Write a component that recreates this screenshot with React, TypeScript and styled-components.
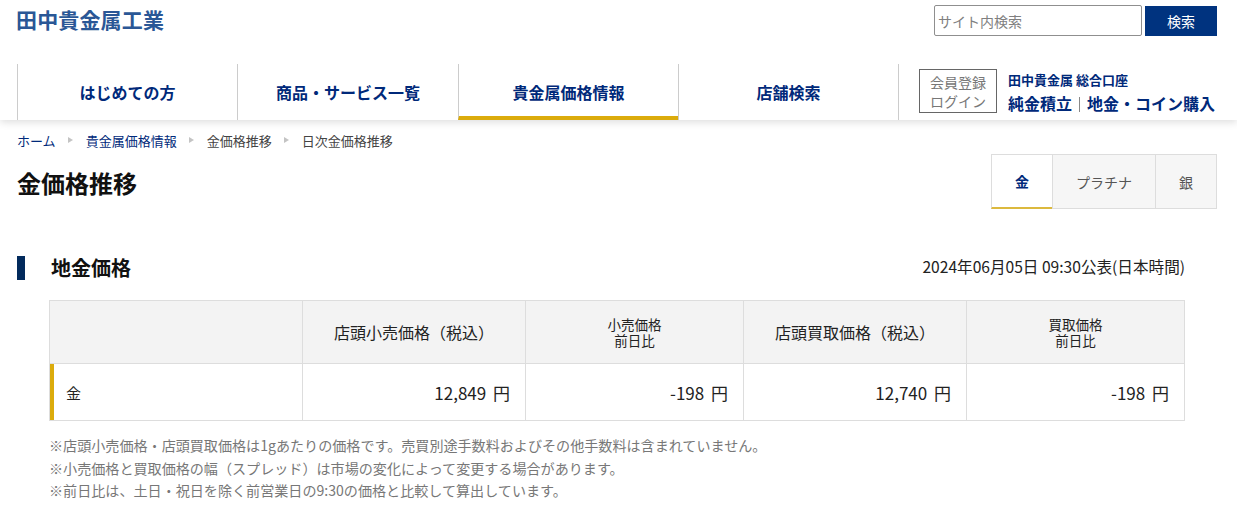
import { Fragment } from "react";
import styled, { createGlobalStyle } from "styled-components";

const GlobalStyle = createGlobalStyle`
  html, body {
    margin: 0;
    padding: 0;
    background: #fff;
    color: #222;
    font-family: "Noto Sans CJK JP", "Noto Sans", sans-serif;
  }
  * { box-sizing: border-box; }
`;

const Page = styled.div`
  width: 1237px;
  height: 512px;
  overflow: hidden;
`;

const Header = styled.header`
  height: 120px;
  background: #fff;
  box-shadow: 0 2px 8px rgb(0 0 0 / 14%);
  position: relative;
`;

const TopRow = styled.div`
  height: 64px;
  display: flex;
  justify-content: space-between;
  padding: 5px 20px 0 16px;
`;

const Logo = styled.div`
  margin-top: -1px;
  font-size: 21px;
  line-height: 31px;
  font-weight: 700;
  letter-spacing: 0.15px;
  color: #2a5796;
`;

const SearchForm = styled.form`
  display: flex;
  gap: 3px;
  height: 31px;
`;

const SearchInput = styled.input`
  width: 208px;
  height: 31px;
  padding: 0 3px;
  border: 1px solid #8f8f8f;
  border-radius: 2px;
  font-family: inherit;
  font-size: 14px;
  outline: none;
  &::placeholder { color: #808080; opacity: 1; }
`;

const SearchButton = styled.button`
  width: 72px;
  height: 30px;
  margin-top: 1px;
  border: 0;
  background: #00337f;
  color: #fff;
  font-family: inherit;
  font-size: 14px;
`;

const Nav = styled.nav`
  display: flex;
  height: 56px;
  padding-left: 17px;
`;

const NavItem = styled.a<{ $active?: boolean; $width: number }>`
  width: ${(p) => p.$width}px;
  border-left: 1px solid #ccc;
  border-bottom: ${(p) => (p.$active ? "4px solid #dbab0c" : "0")};
  padding-top: ${(p) => (p.$active ? "4px" : "0")};
  display: flex;
  align-items: center;
  justify-content: center;
  color: #00297a;
  font-size: 16px;
  font-weight: 700;
`;

const AccountCell = styled.div`
  border-left: 1px solid #ccc;
  flex: 1;
  display: flex;
  padding: 5px 0 0 20px;
  gap: 11px;
`;

const LoginBox = styled.a`
  width: 78px;
  height: 44px;
  border: 1px solid #666;
  color: #777;
  font-size: 14px;
  line-height: 18.5px;
  text-align: center;
  padding-top: 3px;
`;

const AccountText = styled.div`
  color: #00297a;
  font-weight: 700;
`;

const AccountName = styled.div`
  font-size: 13px;
  line-height: 22px;
`;

const AccountLinks = styled.div`
  font-size: 16px;
  line-height: 25px;
  white-space: nowrap;
`;

const Separator = styled.span`
  display: inline-block;
  width: 1px;
  height: 15px;
  margin: 0 7px;
  background: #888;
  vertical-align: -2px;
`;

const Breadcrumbs = styled.ol`
  list-style: none;
  margin: 0;
  padding: 6px 0 0 17px;
  height: 34px;
  display: flex;
  align-items: center;
  font-size: 13px;
`;

const Crumb = styled.li<{ $link?: boolean }>`
  color: ${(p) => (p.$link ? "#00297a" : "#444")};
`;

const CrumbArrow = styled.li`
  width: 30px;
  display: flex;
  justify-content: center;
  &::before {
    content: "";
    border-left: 5px solid #c4c4c4;
    border-top: 3px solid transparent;
    border-bottom: 3px solid transparent;
  }
`;

const TitleRow = styled.div`
  display: flex;
  justify-content: space-between;
  padding: 0 20px 0 17px;
`;

const PageTitle = styled.h1`
  margin: 0;
  font-size: 24px;
  line-height: 58px;
  font-weight: 700;
  color: #111;
`;

const Tabs = styled.div`
  display: flex;
  height: 55px;
`;

const Tab = styled.a<{ $active?: boolean; $width: number }>`
  width: ${(p) => p.$width}px;
  display: flex;
  align-items: center;
  justify-content: center;
  border: 1px solid #ddd;
  border-bottom: ${(p) => (p.$active ? "2px solid #dcb93e" : "1px solid #ddd")};
  background: ${(p) => (p.$active ? "#fff" : "#f6f6f6")};
  color: ${(p) => (p.$active ? "#00297a" : "#555")};
  font-size: 14px;
  font-weight: ${(p) => (p.$active ? 700 : 400)};
  & + & { margin-left: -1px; }
`;

const SectionHead = styled.div`
  display: flex;
  align-items: center;
  justify-content: space-between;
  margin-top: 44px;
  padding: 0 52px 0 17px;
  height: 24px;
`;

const SectionTitle = styled.h2`
  margin: 0;
  padding-left: 26px;
  border-left: 8px solid #022a5c;
  font-size: 20px;
  line-height: 24px;
  font-weight: 700;
  color: #111;
`;

const Published = styled.div`
  margin-bottom: 4px;
  font-size: 15.6px;
  color: #222;
`;

const PriceTable = styled.table`
  margin: 20px 0 0 49px;
  width: 1136px;
  table-layout: fixed;
  border-collapse: separate;
  border-spacing: 0;
  border-top: 1px solid #ddd;
  border-left: 1px solid #ddd;
`;

const HeadCell = styled.th<{ $small?: boolean; $width: number }>`
  width: ${(p) => p.$width}px;
  height: 63px;
  padding: 0;
  border-right: 1px solid #ddd;
  border-bottom: 1px solid #ddd;
  background: #f3f3f3;
  font-size: ${(p) => (p.$small ? "13.5px" : "16px")};
  line-height: ${(p) => (p.$small ? "16px" : "22px")};
  font-weight: 400;
  color: #222;
`;

const MetalCell = styled.td`
  height: 57px;
  padding: 0 0 0 16px;
  border-right: 1px solid #ddd;
  border-bottom: 1px solid #ddd;
  box-shadow: inset 4px 0 0 #dbab0c;
  font-size: 15px;
`;

const PriceCell = styled.td`
  padding: 0 15px 0 0;
  border-right: 1px solid #ddd;
  border-bottom: 1px solid #ddd;
  text-align: right;
  font-size: 17px;
  word-spacing: 3px;
`;

const Notes = styled.ul`
  list-style: none;
  margin: 13px 0 0 49px;
  padding: 0;
  font-size: 14.08px;
  line-height: 22.5px;
  color: #777;
`;

const navItems = [
  { label: "はじめての方", width: 220 },
  { label: "商品・サービス一覧", width: 221 },
  { label: "貴金属価格情報", width: 220, active: true },
  { label: "店舗検索", width: 220 },
];

const crumbs = ["ホーム", "貴金属価格情報", "金価格推移", "日次金価格推移"];

const notes = [
  "※店頭小売価格・店頭買取価格は1gあたりの価格です。売買別途手数料およびその他手数料は含まれていません。",
  "※小売価格と買取価格の幅（スプレッド）は市場の変化によって変更する場合があります。",
  "※前日比は、土日・祝日を除く前営業日の9:30の価格と比較して算出しています。",
];

export default function App() {
  return (
    <Page>
      <GlobalStyle />
      <Header>
        <TopRow>
          <Logo>田中貴金属工業</Logo>
          <SearchForm>
            <SearchInput placeholder="サイト内検索" />
            <SearchButton type="button">検索</SearchButton>
          </SearchForm>
        </TopRow>
        <Nav>
          {navItems.map((item) => (
            <NavItem key={item.label} $active={item.active} $width={item.width}>
              {item.label}
            </NavItem>
          ))}
          <AccountCell>
            <LoginBox>
              会員登録
              <br />
              ログイン
            </LoginBox>
            <AccountText>
              <AccountName>田中貴金属 総合口座</AccountName>
              <AccountLinks>
                純金積立
                <Separator />
                地金・コイン購入
              </AccountLinks>
            </AccountText>
          </AccountCell>
        </Nav>
      </Header>
      <Breadcrumbs>
        {crumbs.map((c, i) => (
          <Fragment key={c}>
            <Crumb $link={i < 2}>{c}</Crumb>
            {i < crumbs.length - 1 && <CrumbArrow />}
          </Fragment>
        ))}
      </Breadcrumbs>
      <TitleRow>
        <PageTitle>金価格推移</PageTitle>
        <Tabs>
          <Tab $active $width={62}>金</Tab>
          <Tab $width={104}>プラチナ</Tab>
          <Tab $width={62}>銀</Tab>
        </Tabs>
      </TitleRow>
      <SectionHead>
        <SectionTitle>地金価格</SectionTitle>
        <Published>2024年06月05日 09:30公表(日本時間)</Published>
      </SectionHead>
      <PriceTable>
        <thead>
          <tr>
            <HeadCell $width={253} />
            <HeadCell $width={223}>店頭小売価格（税込）</HeadCell>
            <HeadCell $small $width={218}>
              小売価格
              <br />
              前日比
            </HeadCell>
            <HeadCell $width={223}>店頭買取価格（税込）</HeadCell>
            <HeadCell $small $width={218}>
              買取価格
              <br />
              前日比
            </HeadCell>
          </tr>
        </thead>
        <tbody>
          <tr>
            <MetalCell>金</MetalCell>
            <PriceCell>12,849 円</PriceCell>
            <PriceCell>-198 円</PriceCell>
            <PriceCell>12,740 円</PriceCell>
            <PriceCell>-198 円</PriceCell>
          </tr>
        </tbody>
      </PriceTable>
      <Notes>
        {notes.map((n) => (
          <li key={n}>{n}</li>
        ))}
      </Notes>
    </Page>
  );
}
